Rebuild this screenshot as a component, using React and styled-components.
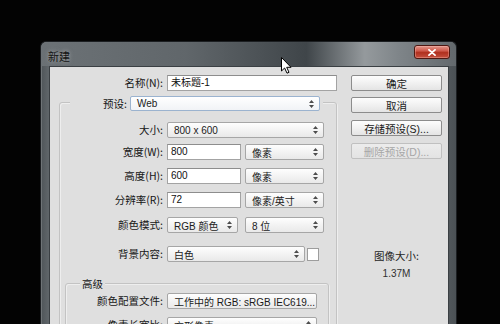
import React from "react";
import styled, { createGlobalStyle } from "styled-components";

const GlobalStyle = createGlobalStyle`
  html, body { margin: 0; padding: 0; background: #000; }
  body {
    width: 500px; height: 324px; overflow: hidden;
    font-family: "Liberation Sans", "Noto Sans CJK SC", sans-serif;
  }
`;

const Page = styled.div`
  position: relative;
  width: 500px;
  height: 324px;
  box-sizing: border-box;
  padding: 41px 0 0 40px;
  overflow: hidden;
  background: #030303;
`;

const Window = styled.div`
  width: 417px;
  height: 300px;
  box-sizing: border-box;
  border: 1px solid #1c1f22;
  border-bottom: none;
  border-radius: 6px 6px 0 0;
  padding: 0 7px 0 8px;
  background: linear-gradient(90deg, #4f5559 0%, #6a7074 3%, #666c70 40%, #555b5f 62%, #7b8185 80%, #6a7074 90%, #4b5155 100%);
  box-shadow: inset 1px 1px 0 rgba(255,255,255,0.18);
`;

const TitleBar = styled.div`
  height: 24px;
  margin: 0 -7px 0 -8px;
  padding: 0 6px 0 7px;
  display: flex;
  align-items: flex-start;
  justify-content: space-between;
  border-radius: 6px 6px 0 0;
  background: linear-gradient(90deg, rgba(108,114,118,0.95) 0%, rgba(96,102,106,0.95) 35%, rgba(62,68,72,0.95) 64%, rgba(150,155,158,0.95) 78%, rgba(128,134,138,0.95) 86%, rgba(100,106,110,0.95) 100%);
`;

const Title = styled.span`
  margin-top: 8px;
  font-family: "Noto Sans CJK SC", sans-serif;
  font-size: 11px;
  line-height: 13px;
  color: #141414;
  text-shadow: 0 0 4px rgba(230,230,230,0.55);
`;

const CloseButton = styled.div`
  width: 36px;
  height: 14px;
  margin-top: 3px;
  box-sizing: border-box;
  border: 1px solid #4e1812;
  border-radius: 3px;
  display: flex;
  align-items: center;
  justify-content: center;
  background: linear-gradient(180deg, #e3978c 0%, #cf5a4c 40%, #b0301f 55%, #c4503f 100%);
  box-shadow: inset 0 0 0 1px rgba(255,200,190,0.35);
`;

const Client = styled.div`
  width: 400px;
  height: 270px;
  box-sizing: border-box;
  border: 1px solid #3a3f43;
  background: #dfdfdf;
  display: flex;
  padding-top: 8px;
  font-size: 10px;
  color: #1c1c1c;
`;

const LeftPane = styled.div`
  width: 301px;
  flex-shrink: 0;
  display: flex;
  flex-direction: column;
`;

const RightPane = styled.div`
  width: 91px;
  display: flex;
  flex-direction: column;
`;

const Row = styled.div`
  display: flex;
  align-items: center;
  height: 16px;
  margin-top: ${p => p.$mt || 0}px;
`;

const Label = styled.span`
  width: ${p => p.$w}px;
  flex-shrink: 0;
  margin-right: 4px;
  text-align: right;
  font-family: "Noto Sans CJK SC", sans-serif;
  font-size: 10.5px;
  line-height: 16px;
  color: #161616;
  white-space: nowrap;
`;

const Input = styled.div`
  width: ${p => p.$w}px;
  height: 16px;
  box-sizing: border-box;
  flex-shrink: 0;
  border: 1px solid #a3a3a3;
  border-top-color: #8d8d8d;
  background: #fff;
  padding-left: 3px;
  line-height: 14px;
  font-size: 10px;
  font-family: "Liberation Sans", "Noto Sans CJK SC", sans-serif;
  color: #111;
  white-space: nowrap;
`;

const Select = styled.div`
  width: ${p => p.$w}px;
  height: ${p => p.$h || 16}px;
  box-sizing: border-box;
  flex-shrink: 0;
  margin-left: ${p => p.$ml || 0}px;
  border: 1px solid ${p => (p.$focus ? "#9bb3cf" : "#a6a6a6")};
  border-radius: 2px;
  background: ${p => (p.$focus ? "linear-gradient(180deg, #ffffff, #f1f3f6)" : "linear-gradient(180deg, #fefefe 0%, #f3f3f3 50%, #e9e9e9 100%)")};
  display: flex;
  align-items: center;
  justify-content: space-between;
  padding: 0 5px 0 6px;
  font-size: 10px;
  font-family: "Liberation Sans", "Noto Sans CJK SC", sans-serif;
  color: #1b1b1b;
  white-space: nowrap;
`;

const Swatch = styled.div`
  width: 12px;
  height: 13px;
  margin-left: 2px;
  box-sizing: border-box;
  border: 1px solid #9d9d9d;
  background: #fff;
  flex-shrink: 0;
`;

const GroupBox = styled.div`
  border: 1px solid #c3c3c3;
  border-radius: 3px;
  box-shadow: 1px 1px 0 #eeeeee, inset 1px 1px 0 #eeeeee;
  margin: ${p => p.$margin};
  width: ${p => (p.$w ? `${p.$w}px` : "auto")};
  box-sizing: border-box;
  display: flex;
  flex-direction: column;
  padding-bottom: 30px;
`;

const Legend = styled.div`
  display: flex;
  align-items: center;
  justify-content: flex-end;
  gap: 3px;
  width: ${p => (p.$w ? `${p.$w}px` : "fit-content")};
  margin: -7px 0 0 ${p => p.$ml}px;
  padding: 0 ${p => p.$pr || 2}px 0 2px;
  background: #dfdfdf;
  font-family: "Noto Sans CJK SC", sans-serif;
  font-size: 10.5px;
  line-height: 13px;
  color: #161616;
`;

const Button = styled.div`
  height: 16px;
  box-sizing: border-box;
  margin-top: ${p => p.$mt || 0}px;
  border: 1px solid ${p => (p.$disabled ? "#c0c0c0" : "#8c8c8c")};
  border-radius: 2px;
  background: ${p => (p.$disabled ? "linear-gradient(180deg, #ececec, #e3e3e3)" : "linear-gradient(180deg, #fdfdfd 0%, #f1f1f1 50%, #e4e4e4 100%)")};
  display: flex;
  align-items: center;
  justify-content: center;
  font-family: "Liberation Sans", "Noto Sans CJK SC", sans-serif;
  font-size: 10.5px;
  color: ${p => (p.$disabled ? "#a6a6a6" : "#1a1a1a")};
  white-space: nowrap;
`;

const SizeInfo = styled.div`
  margin-top: 90px;
  display: flex;
  flex-direction: column;
  align-items: center;
  font-family: "Noto Sans CJK SC", sans-serif;
  font-size: 10.5px;
  line-height: 13px;
  color: #262626;
`;

const SizeValue = styled.span`
  margin-top: 5px;
  font-family: "Liberation Sans", sans-serif;
  font-size: 10px;
  color: #303030;
`;

const CursorWrap = styled.div`
  position: absolute;
  left: 281px;
  top: 57px;
  width: 11px;
  height: 17px;
  pointer-events: none;
`;

const Arrows = () => (
  <svg width="5" height="8" viewBox="0 0 5 8">
    <path d="M2.5 0 L5 3 H0 Z M0 5 H5 L2.5 8 Z" fill="#4d4d4d" />
  </svg>
);

const Sel = ({ w, h, ml, focus, children }) => (
  <Select $w={w} $h={h} $ml={ml} $focus={focus}>
    <span>{children}</span>
    <Arrows />
  </Select>
);

export default function App() {
  return (
    <>
      <GlobalStyle />
      <Page>
        <Window>
          <TitleBar>
            <Title>新建</Title>
            <CloseButton>
              <svg width="8" height="7" viewBox="0 0 8 7">
                <path d="M1 0.8 L7 6.2 M7 0.8 L1 6.2" stroke="#fff" strokeWidth="1.8" strokeLinecap="round" />
              </svg>
            </CloseButton>
          </TitleBar>
          <Client>
            <LeftPane>
              <Row>
                <Label $w={113}>名称(N):</Label>
                <Input $w={170}>未标题-1</Input>
              </Row>
              <GroupBox $margin="11px 0 0 9px" $w={278}>
                <Legend $ml={10} $w={248} $pr={3}>
                  <span>预设:</span>
                  <Sel w={190} h={15} focus>Web</Sel>
                </Legend>
                <Row $mt={11}>
                  <Label $w={103}>大小:</Label>
                  <Sel w={157}>800 x 600</Sel>
                </Row>
                <Row $mt={6}>
                  <Label $w={103}>宽度(W):</Label>
                  <Input $w={74}>800</Input>
                  <Sel w={79} ml={4}>像素</Sel>
                </Row>
                <Row $mt={8}>
                  <Label $w={103}>高度(H):</Label>
                  <Input $w={74}>600</Input>
                  <Sel w={79} ml={4}>像素</Sel>
                </Row>
                <Row $mt={8}>
                  <Label $w={103}>分辨率(R):</Label>
                  <Input $w={74}>72</Input>
                  <Sel w={79} ml={4}>像素/英寸</Sel>
                </Row>
                <Row $mt={9}>
                  <Label $w={103}>颜色模式:</Label>
                  <Sel w={71}>RGB 颜色</Sel>
                  <Sel w={79} ml={7}>8 位</Sel>
                </Row>
                <Row $mt={13}>
                  <Label $w={103}>背景内容:</Label>
                  <Sel w={138}>白色</Sel>
                  <Swatch />
                </Row>
                <GroupBox $margin="21px 7px 0 5px">
                  <Legend $ml={14}>
                    <span>高级</span>
                  </Legend>
                  <Row $mt={3}>
                    <Label $w={97}>颜色配置文件:</Label>
                    <Sel w={150}>工作中的 RGB: sRGB IEC619...</Sel>
                  </Row>
                  <Row $mt={8}>
                    <Label $w={97}>像素长宽比:</Label>
                    <Sel w={150}>方形像素</Sel>
                  </Row>
                </GroupBox>
              </GroupBox>
            </LeftPane>
            <RightPane>
              <Button>确定</Button>
              <Button $mt={6}>取消</Button>
              <Button $mt={7}>存储预设(S)...</Button>
              <Button $mt={7} $disabled>删除预设(D)...</Button>
              <SizeInfo>
                <span>图像大小:</span>
                <SizeValue>1.37M</SizeValue>
              </SizeInfo>
            </RightPane>
          </Client>
        </Window>
        <CursorWrap>
          <svg width="11" height="17" viewBox="0 0 11 17">
            <path d="M0.5 0.5 L0.5 14 L3.6 11 L6 16.2 L8 15.3 L5.7 10.3 L10 10.3 Z" fill="#fff" stroke="#000" strokeWidth="1" strokeLinejoin="round" />
          </svg>
        </CursorWrap>
      </Page>
    </>
  );
}
